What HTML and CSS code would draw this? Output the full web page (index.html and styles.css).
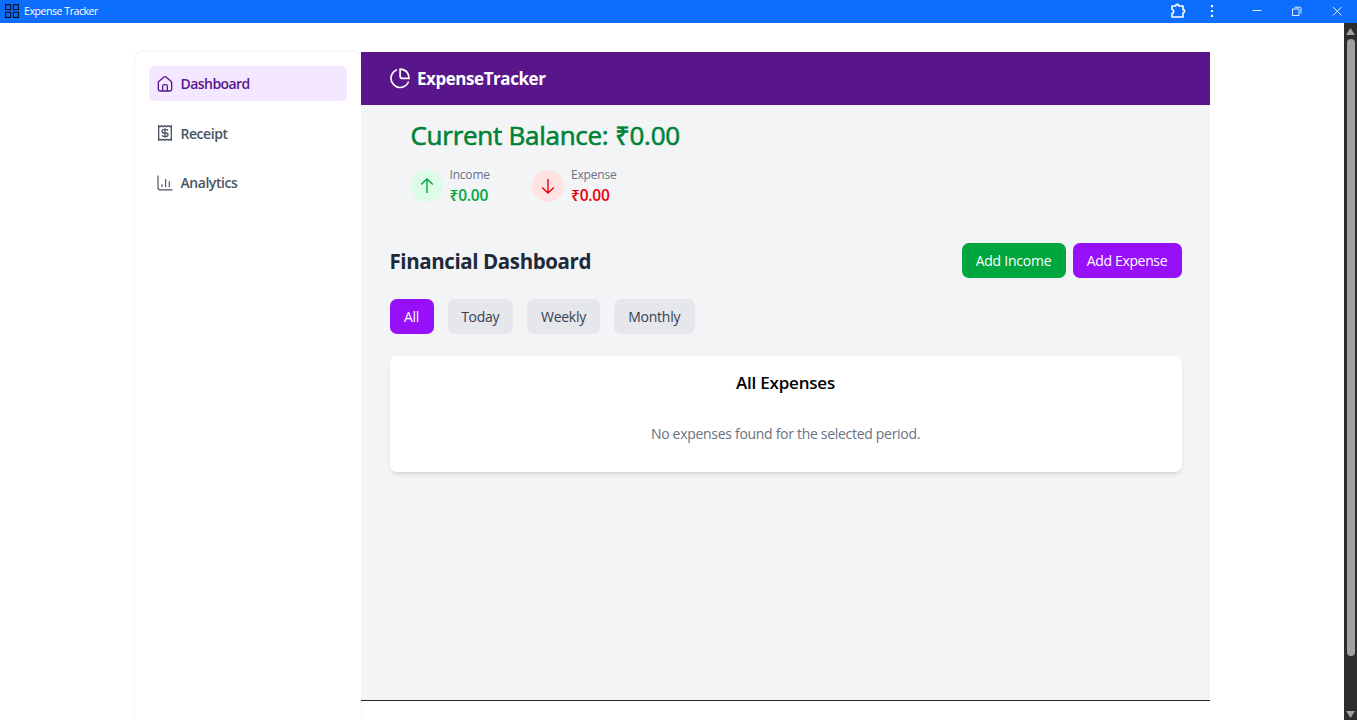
FILE: index.html
```html
<!DOCTYPE html>
<html lang="en">
<head>
<meta charset="utf-8">
<title>Expense Tracker</title>
<link rel="stylesheet" href="styles.css">
</head>
<body>
<header class="titlebar">
  <svg class="app-icon" viewBox="0 0 14 14"><path d="M.6.6h5v5h-5zM8.4.6h5v5h-5zM.6 8.4h5v5h-5zM8.4 8.4h5v5h-5z"/></svg>
  <span class="app-name">Expense Tracker</span>
  <div class="window-tools">
    <svg class="tool puzzle" viewBox="0 0 16 16"><path d="M2 3h3.700a1.600 1.600 0 0 1 3.200 0H13v3.600a1.600 1.600 0 0 1 0 3.200V14H2v-3.500c2.300-.3 2.300-3.700 0-4z"/></svg>
    <svg class="tool dots" viewBox="0 0 16 16"><path d="M6.900 2h2.200v2.200H6.900zM6.900 6.900h2.200v2.200H6.900zM6.900 11.800h2.200V14H6.900z"/></svg>
    <svg class="tool thin" viewBox="0 0 16 16"><path d="M3.500 7.500h9"/></svg>
    <svg class="tool thin" viewBox="0 0 16 16"><path d="M3.500 6h6.500v6.500H3.500zM5.500 4.200h5.200q1.300 0 1.300 1.300v5"/></svg>
    <svg class="tool thin" viewBox="0 0 16 16"><path d="M4 4l8.500 8.500M12.500 4L4 12.500"/></svg>
  </div>
</header>
<div class="viewport">
  <div class="page">
    <nav class="sidebar">
      <a class="nav-item active"><svg class="icon" viewBox="0 0 24 24"><path d="M2 20V10.200q0-1.400 1-2.200l7.600-6.400q1.400-1.100 2.800 0L21 8q1 .8 1 2.200V20q0 2.500-2.500 2.500h-15Q2 22.500 2 20M8.500 22v-6.500q0-2.500 2.500-2.500h2q2.500 0 2.500 2.500V22"/></svg><span>Dashboard</span></a>
      <a class="nav-item"><svg class="icon" viewBox="0 0 24 24"><path d="M2.500 1.200l2 1.300 2.500-1.300 2.500 1.300L12 1.200l2.500 1.300L17 1.200l2.500 1.300 2-1.300v21.600l-2-1.300-2.500 1.300-2.500-1.300-2.500 1.300-2.500-1.300L7 22.800l-2.500-1.300-2 1.300zM16.500 8.500Q15.500 7 13.500 7h-3Q7.500 7 7.500 9.500T10.500 12h3q3 0 3 2.500T13.500 17h-3q-2 0-3-1.500M12 5v14"/></svg><span>Receipt</span></a>
      <a class="nav-item"><svg class="icon slim" viewBox="0 0 24 24"><path d="M1.500.8v18q0 3.400 3.400 3.400h18.300M7.500 14v4M13 6v12M18.500 9.500V18"/></svg><span>Analytics</span></a>
    </nav>
    <main class="main">
      <div class="brand-bar">
        <svg class="brand-icon" viewBox="0 0 24 24"><path d="M9.200 2A10.400 10.400 0 1 0 22.400 15.500M12.700 1.300V9.500q0 2.300 2.300 2.300h7.900Q22.500 2 12.700 1.300z"/></svg>
        <span class="brand">ExpenseTracker</span>
      </div>
      <section class="summary">
        <h1 class="balance">Current Balance: ₹0.00</h1>
        <div class="totals">
          <div class="total income">
            <div class="badge"><svg viewBox="0 0 18 18"><path d="M9 16V2M3.200 7.600L9 1.900l5.800 5.700"/></svg></div>
            <div><div class="label">Income</div><div class="amount">₹0.00</div></div>
          </div>
          <div class="total expense">
            <div class="badge"><svg viewBox="0 0 18 18"><path d="M9 2v14M3.200 10.400L9 16.100l5.800-5.700"/></svg></div>
            <div><div class="label">Expense</div><div class="amount">₹0.00</div></div>
          </div>
        </div>
      </section>
      <section class="dashboard">
        <div class="heading-row">
          <h2 class="heading">Financial Dashboard</h2>
          <div class="actions"><button class="btn add-income">Add Income</button><button class="btn add-expense">Add Expense</button></div>
        </div>
        <div class="filters">
          <button class="btn f-all">All</button><button class="btn f-today">Today</button><button class="btn f-weekly">Weekly</button><button class="btn f-monthly">Monthly</button>
        </div>
        <div class="card">
          <h3 class="card-title">All Expenses</h3>
          <p class="empty">No expenses found for the selected period.</p>
        </div>
      </section>
    </main>
  </div>
  <div class="scrollbar">
    <svg class="arrow" viewBox="0 0 9 7"><path d="M4.500 0L9 7H0z"/></svg>
    <div class="thumb"></div>
    <svg class="arrow" viewBox="0 0 9 7"><path d="M0 0h9L4.500 7z"/></svg>
  </div>
</div>
</body>
</html>
```

FILE: styles.css
```css
* { box-sizing: border-box; }
body { margin: 0; height: 720px; overflow: hidden; background: #fff; font-family: "Open Sans", "Noto Sans", sans-serif; font-size: 14px; color: #000; }
h1, h2, h3, p { margin: 0; }
svg { display: block; fill: none; stroke: currentColor; }
span, h1, h2, h3, p, .label, .amount, .btn { white-space: nowrap; }

.titlebar { height: 23px; background: #0d6efd; display: flex; align-items: center; padding: 0 12px 1px 5px; color: #fff; }
.app-icon { width: 14px; height: 14px; color: #07152e; stroke-width: 1.2; }
.app-name { margin-left: 5px; font-size: 10.5px; line-height: 22px; letter-spacing: -0.43px; }
.window-tools { margin-left: auto; display: flex; align-items: center; }
.tool { width: 16px; height: 16px; }
.puzzle { margin-right: 18px; stroke-width: 1.6; stroke-linejoin: round; }
.dots { margin-right: 29px; fill: #fff; stroke: none; }
.thin { stroke-width: 0.9; margin-right: 24px; }
.thin:last-child { margin-right: 0; }

.viewport { display: flex; height: 697px; }
.page { flex: 1; display: flex; padding: 29px 134px 0 135px; }
.sidebar { width: 226px; height: 680px; padding: 14px; border-radius: 7px 7px 0 0; box-shadow: 0 0 2px rgba(0, 0, 0, 0.16); display: flex; flex-direction: column; gap: 14.5px; }
.nav-item { height: 35px; display: flex; align-items: center; gap: 7.5px; padding-left: 8px; border-radius: 5px; color: #4a5565; font-weight: 600; letter-spacing: -0.45px; }
.active { background: #f3e8ff; color: #59168b; letter-spacing: -0.55px; }
.icon { width: 16px; height: 16px; stroke-width: 2; }
.slim { stroke-width: 1.8; }

.main { width: 849px; height: 649px; background: #f3f4f6; border-bottom: 1px solid #212529; }
.brand-bar { height: 52.5px; background: #59168b; color: #fff; display: flex; align-items: center; gap: 7px; padding: 0 0 0 28px; }
.brand-icon { width: 21px; height: 21px; stroke-width: 1.9; }
.brand { padding-top: 2px; font-size: 17px; font-weight: 700; letter-spacing: -0.45px; line-height: 24px; }

.summary { padding: 12.5px 49.5px 0; height: 125px; }
.balance { font-size: 26px; line-height: 36px; font-weight: 400; letter-spacing: -0.27px; color: #008236; -webkit-text-stroke: 0.6px currentColor; }
.totals { display: flex; gap: 41.5px; margin-top: 12.5px; }
.total { display: flex; align-items: center; gap: 7px; }
.badge { width: 32px; height: 32px; border-radius: 50%; display: flex; align-items: center; justify-content: center; }
.badge svg { width: 18px; height: 18px; stroke-width: 1.4; }
.label { width: 41px; font-size: 12px; line-height: 18px; color: #6a7282; letter-spacing: -0.2px; }
.amount { font-size: 15.5px; line-height: 22px; font-weight: 600; letter-spacing: -0.2px; }
.income { color: #00a63e; }
.income .badge { background: #dcfce7; }
.expense { color: #e7000b; }
.expense .badge { background: #ffe2e2; }

.dashboard { padding: 13px 28.5px 0; }
.heading-row { display: flex; justify-content: space-between; align-items: center; height: 35.5px; }
.heading { padding-top: 1px; font-size: 20.5px; line-height: 32px; font-weight: 700; color: #1e2939; letter-spacing: -0.4px; }
.actions { display: flex; gap: 7px; }
.btn { height: 35.5px; border: 0; border-radius: 7px; padding: 0; font-family: inherit; font-size: 14px; line-height: 36px; text-align: center; color: #fff; letter-spacing: -0.25px; }
.add-income { width: 104px; background: #00a63e; }
.add-expense { width: 109px; background: #9810fa; letter-spacing: -0.35px; }
.filters { display: flex; gap: 14px; margin-top: 20.5px; }
.filters .btn { background: #e5e7eb; color: #364153; }
.filters .f-all { width: 44px; background: #9810fa; color: #fff; }
.f-today { width: 65.5px; }
.f-weekly { width: 73px; }
.f-monthly { width: 80.5px; }
.card { margin-top: 21.5px; height: 116px; background: #fff; border-radius: 7px; box-shadow: 0 3px 5px -1px rgba(0, 0, 0, 0.1), 0 2px 3px -2px rgba(0, 0, 0, 0.1); text-align: center; padding-top: 14.5px; }
.card-title { font-size: 17px; line-height: 25px; font-weight: 600; letter-spacing: -0.22px; }
.empty { margin-top: 26px; font-size: 14px; line-height: 25px; color: #6a7282; letter-spacing: -0.3px; }

.scrollbar { width: 13px; background: #2c2c2c; display: flex; flex-direction: column; align-items: center; padding: 5px 0 2px; }
.arrow { width: 9px; height: 7px; fill: #9f9f9f; stroke: none; }
.thumb { width: 8px; height: 617px; margin: 4px 0 auto; border-radius: 4px; background: #9f9f9f; }
```
